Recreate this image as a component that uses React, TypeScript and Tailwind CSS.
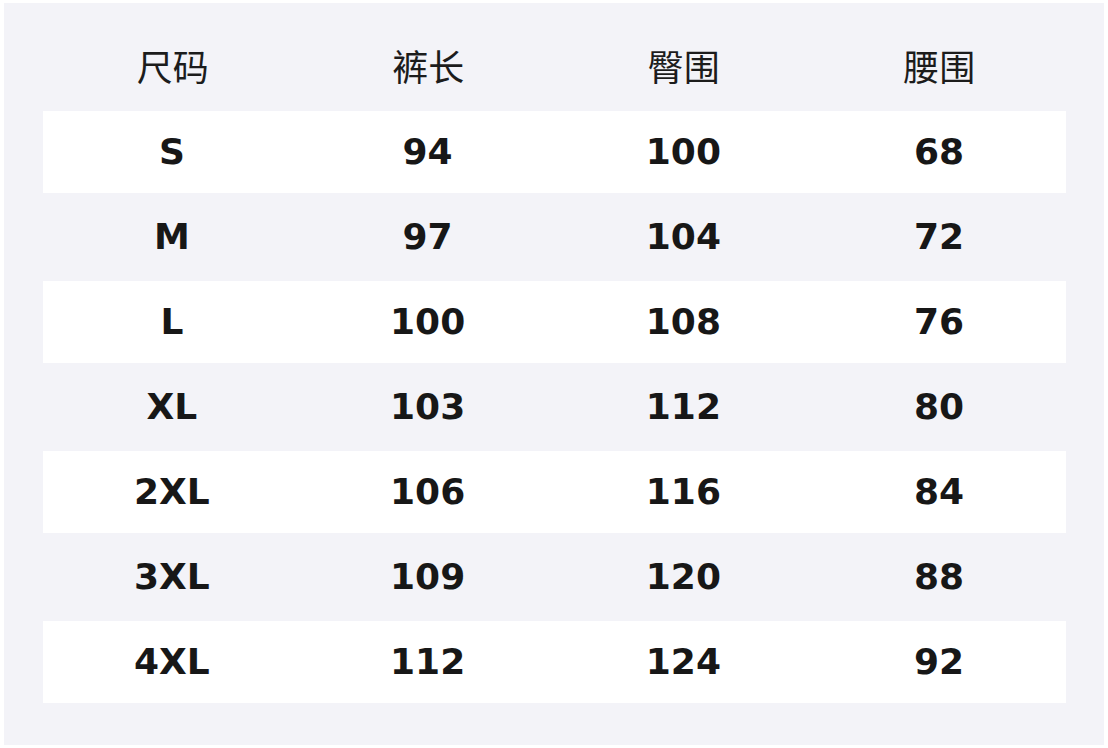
const headers = ['尺码', '裤长', '臀围', '腰围'];

const rows: string[][] = [
  ['S', '94', '100', '68'],
  ['M', '97', '104', '72'],
  ['L', '100', '108', '76'],
  ['XL', '103', '112', '80'],
  ['2XL', '106', '116', '84'],
  ['3XL', '109', '120', '88'],
  ['4XL', '112', '124', '92'],
];

export default function App() {
  return (
    <div className="w-[1108px] h-[748px] bg-white pt-[3px] pl-[4px]">
      <div className="w-[1100px] h-[742px] bg-[#f3f3f8] pl-[40px] pr-[38px] pt-[22px]">
        <div className="grid grid-cols-4 h-[86px] pb-[6px] items-center text-center text-[36px] text-[#1c1c1c] font-['Noto_Sans_CJK_SC',sans-serif] font-normal">
          {headers.map(h => (
            <div key={h} className="pl-[2px]">{h}</div>
          ))}
        </div>
        <div className="flex flex-col -ml-[1px]">
          {rows.map((r, i) => (
            <div
              key={r[0]}
              className={`grid grid-cols-4 items-center text-center text-[36px] font-bold text-[#171717] font-['DejaVu_Sans',sans-serif] ${
                i % 2 === 0 ? 'bg-white h-[82px]' : 'bg-transparent h-[88px]'
              }`}
            >
              {r.map((c, j) => (
                <div key={j} className="pl-[2px]">{c}</div>
              ))}
            </div>
          ))}
        </div>
      </div>
    </div>
  );
}
